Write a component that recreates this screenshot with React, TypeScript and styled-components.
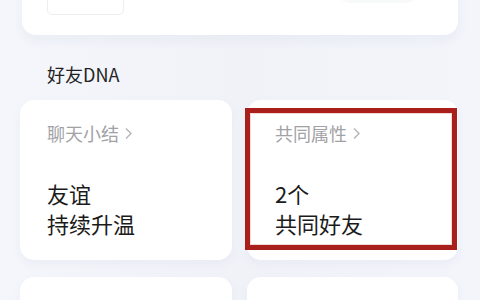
import React from 'react'
import styled, { createGlobalStyle } from 'styled-components'

const GlobalStyle = createGlobalStyle`
  html, body {
    margin: 0;
    padding: 0;
    background: #f1f3f9;
    font-family: "Noto Sans CJK SC", "Noto Sans", sans-serif;
    overflow: hidden;
  }
`

const Page = styled.div`
  width: 480px;
  height: 300px;
  overflow: hidden;
  padding: 0 22px 0 20px;
  box-sizing: border-box;
  background: linear-gradient(90deg, #f4f6fb 0%, #f0f2f8 50%, #f3f5fb 100%);
`

const TopCard = styled.div`
  margin: -45px 0 0 2px;
  height: 80px;
  background: #fff;
  border-radius: 14px;
  box-shadow: 0 6px 10px rgba(170, 180, 205, 0.12);
  display: flex;
  justify-content: space-between;
  padding: 0 38px 0 25px;
  box-sizing: border-box;
`

const Thumb = styled.div`
  width: 75px;
  height: 30px;
  margin-top: 28px;
  border: 1px solid #eceef2;
  border-radius: 5px;
`

const Pill = styled.div`
  width: 84px;
  height: 28px;
  margin-top: 20px;
  border-radius: 14px;
  background: #f7faf8;
`

const SectionTitle = styled.h2`
  margin: 27px 0 0 27px;
  font-size: 18px;
  font-weight: 400;
  color: #222;
  line-height: 24px;
`

const Grid = styled.div`
  display: grid;
  grid-template-columns: 212px 211px;
  column-gap: 15px;
  row-gap: 17px;
  margin-top: 14px;
`

const Card = styled.div<{ $inset?: number }>`
  position: relative;
  height: 160px;
  background: #fff;
  border-radius: 14px;
  padding: 21px 0 0 ${p => p.$inset ?? 27}px;
  box-sizing: border-box;
  box-shadow: 0 4px 8px rgba(170, 180, 205, 0.1);
`

const CardLabel = styled.div`
  font-size: 18px;
  line-height: 24px;
  color: #a2a2a6;
  display: flex;
  align-items: center;
  gap: 5px;
`

const Chevron = styled.svg`
  width: 9px;
  height: 13px;
`

const CardValue = styled.div`
  margin-top: 33px;
  font-size: 22px;
  line-height: 30px;
  color: #1b1b1b;
`

const Highlight = styled.div`
  position: absolute;
  left: -2px;
  top: 8px;
  width: 212px;
  height: 142px;
  border: 5px solid #a81f1b;
  box-sizing: border-box;
  box-shadow: inset 0 0 0 1px #f3d9d6;
  pointer-events: none;
`

function Arrow() {
  return (
    <Chevron viewBox="0 0 9 13">
      <path d="M2 1.5 L7 6.5 L2 11.5" fill="none" stroke="#b5b5b9" strokeWidth="1.4" />
    </Chevron>
  )
}

export default function App() {
  return (
    <>
      <GlobalStyle />
      <Page>
        <TopCard>
          <Thumb />
          <Pill />
        </TopCard>
        <SectionTitle>好友DNA</SectionTitle>
        <Grid>
          <Card>
            <CardLabel>聊天小结<Arrow /></CardLabel>
            <CardValue>友谊<br />持续升温</CardValue>
          </Card>
          <Card $inset={28}>
            <CardLabel>共同属性<Arrow /></CardLabel>
            <CardValue>2个<br />共同好友</CardValue>
            <Highlight />
          </Card>
          <Card />
          <Card />
        </Grid>
      </Page>
    </>
  )
}
